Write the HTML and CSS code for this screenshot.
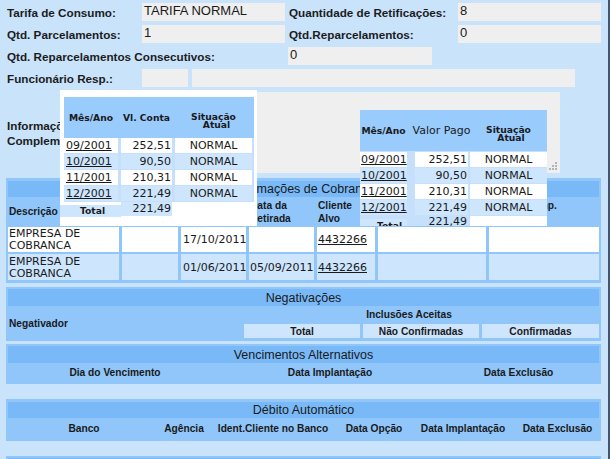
FILE: index.html
```html
<!DOCTYPE html>
<html lang="pt">
<head>
<meta charset="utf-8">
<title>Consulta</title>
<link rel="stylesheet" href="styles.css">
</head>
<body>
<div class="page">
  <div class="form">
    <div class="row">
      <span class="lbl w135">Tarifa de Consumo:</span>
      <span class="val w143">TARIFA NORMAL</span>
      <span class="lbl l2">Quantidade de Retificações:</span>
      <span class="val w143">8</span>
    </div>
    <div class="row">
      <span class="lbl w135">Qtd. Parcelamentos:</span>
      <span class="val w143">1</span>
      <span class="lbl l2">Qtd.Reparcelamentos:</span>
      <span class="val w143">0</span>
    </div>
    <div class="row">
      <span class="lbl w281">Qtd. Reparcelamentos Consecutivos:</span>
      <span class="val w144">0</span>
    </div>
    <div class="row">
      <span class="lbl w135">Funcionário Resp.:</span>
      <span class="val w46"></span>
      <span class="val w383"></span>
    </div>
    <div class="row info">
      <span class="lbl w135 wrap">Informações Complementares:</span>
      <div class="textarea">
        <svg class="grip" width="10" height="10" viewBox="0 0 10 10">
          <rect x="7" y="1" width="2" height="2" fill="#b4b4b4"/>
          <rect x="4" y="4" width="2" height="2" fill="#b4b4b4"/>
          <rect x="7" y="4" width="2" height="2" fill="#b4b4b4"/>
          <rect x="1" y="7" width="2" height="2" fill="#b4b4b4"/>
          <rect x="4" y="7" width="2" height="2" fill="#b4b4b4"/>
          <rect x="7" y="7" width="2" height="2" fill="#b4b4b4"/>
        </svg>
      </div>
    </div>
  </div>

  <div class="panel cob">
    <div class="band b16">Informações de Cobrança</div>
    <div class="cob-grid">
      <div class="h">Descrição</div>
      <div class="h"></div>
      <div class="h"></div>
      <div class="h">Data da<br>Retirada</div>
      <div class="h">Cliente<br>Alvo</div>
      <div class="h"></div>
      <div class="h top">Retorno Emp.</div>

      <div class="d">EMPRESA DE<br>COBRANCA</div>
      <div class="d"></div>
      <div class="d p2">17/10/2011</div>
      <div class="d"></div>
      <div class="d"><a class="lnk">4432266</a></div>
      <div class="d"></div>
      <div class="d"></div>

      <div class="d alt">EMPRESA DE<br>COBRANCA</div>
      <div class="d alt"></div>
      <div class="d alt p2">01/06/2011</div>
      <div class="d alt">05/09/2011</div>
      <div class="d alt"><a class="lnk">4432266</a></div>
      <div class="d alt"></div>
      <div class="d alt"></div>
    </div>
  </div>

  <div class="panel neg">
    <div class="band">Negativações</div>
    <div class="neg-grid">
      <div class="h negativador">Negativador</div>
      <div class="h inc">Inclusões Aceitas</div>
      <div class="h sub">Total</div>
      <div class="h sub">Não Confirmadas</div>
      <div class="h sub">Confirmadas</div>
    </div>
  </div>

  <div class="panel venc">
    <div class="band">Vencimentos Alternativos</div>
    <div class="venc-grid">
      <div class="h c">Dia do Vencimento</div>
      <div class="h c">Data Implantação</div>
      <div class="h c">Data Exclusão</div>
    </div>
  </div>

  <div class="panel deb">
    <div class="band b16">Débito Automático</div>
    <div class="deb-grid">
      <div class="h c">Banco</div>
      <div class="h c">Agência</div>
      <div class="h c">Ident.Cliente no Banco</div>
      <div class="h c">Data Opção</div>
      <div class="h c">Data Implantação</div>
      <div class="h c">Data Exclusão</div>
    </div>
  </div>

  <div class="panel next">
    <div class="band"></div>
  </div>

  <div class="popup1">
    <div class="phead">
      <div class="ph w54">Mês/Ano</div>
      <div class="ph w51 m3">Vl. Conta</div>
      <div class="ph w77 m3 sit"><span>Situação</span><span class="atual">Atual</span></div>
    </div>
    <div class="pbody">
      <div class="prow"><a class="pc w54 lnk l">09/2001</a><span class="pc w51 m3 r">252,51</span><span class="pc w77 m3 ctr">NORMAL</span></div>
      <div class="prow alt"><a class="pc w54 lnk l">10/2001</a><span class="pc w51 m3 r">90,50</span><span class="pc w77 m3 ctr">NORMAL</span></div>
      <div class="prow"><a class="pc w54 lnk l">11/2001</a><span class="pc w51 m3 r">210,31</span><span class="pc w77 m3 ctr">NORMAL</span></div>
      <div class="prow alt"><a class="pc w54 lnk l">12/2001</a><span class="pc w51 m3 r">221,49</span><span class="pc w77 m3 ctr">NORMAL</span></div>
    </div>
    <div class="ptotal">
      <span class="tl">Total</span>
      <span class="tv">221,49</span>
    </div>
  </div>

  <div class="popup2">
    <div class="phead">
      <div class="ph w47">Mês/Ano</div>
      <div class="ph w53 m8 normal">Valor Pago</div>
      <div class="ph w77 m2 sit"><span>Situação</span><span class="atual a2">Atual</span></div>
    </div>
    <div class="prow"><a class="pc w47 lnk l1">09/2001</a><span class="pc w53 m8 r">252,51</span><span class="pc w77 m2 ctr">NORMAL</span></div>
    <div class="prow alt"><a class="pc w47 lnk l1">10/2001</a><span class="pc w53 m8 r">90,50</span><span class="pc w77 m2 ctr">NORMAL</span></div>
    <div class="prow"><a class="pc w47 lnk l1">11/2001</a><span class="pc w53 m8 r">210,31</span><span class="pc w77 m2 ctr">NORMAL</span></div>
    <div class="prow alt"><a class="pc w47 lnk l1">12/2001</a><span class="pc w53 m8 r">221,49</span><span class="pc w77 m2 ctr">NORMAL</span></div>
    <div class="ptotal2">
      <span class="tl2">Total</span>
      <span class="tv2">221,49</span>
      <span class="tw2"></span>
    </div>
  </div>
</div>
</body>
</html>
```

FILE: styles.css
```css
html, body {
  margin: 0;
  padding: 0;
}
body {
  background: #c9e3fb;
  color: #1a1a1a;
  height: 459px;
  overflow: hidden;
}
.page {
  position: relative;
  width: 595px;
  height: 459px;
  padding: 0 7px 0 6px;
  border-right: 2px solid #46556f;
  overflow: hidden;
}

/* top form */
.form {
  padding: 3px 0 0 1px;
  display: flex;
  flex-direction: column;
  gap: 4px;
}
.row {
  display: flex;
  align-items: center;
  height: 18px;
}
.lbl {
  flex: none;
  font: bold 11.7px "Liberation Sans", Arial, sans-serif;
  color: #1c1c1c;
  white-space: nowrap;
}
.lbl.wrap {
  white-space: normal;
  line-height: 15px;
}
.val {
  flex: none;
  box-sizing: border-box;
  height: 18px;
  line-height: 18px;
  padding-left: 2px;
  background: #efefef;
  font: 13px "Liberation Sans", Arial, sans-serif;
  color: #1a1a1a;
}
.w135 { width: 135px; }
.w143 { width: 143px; }
.w144 { width: 144px; }
.w281 { width: 281px; }
.w46 { width: 46px; }
.w383 { width: 383px; margin-left: 4px; }
.l2 { width: 169px; margin-left: 4px; }
.row.info {
  height: 81px;
  margin-top: 1px;
}
.textarea {
  position: relative;
  width: 418px;
  height: 81px;
  background: #efefef;
}
.grip {
  position: absolute;
  right: 2px;
  bottom: 2px;
}

/* panels */
.panel {
  background: #90c6fa;
  padding: 2px 2px 3px;
}
.band {
  height: 17px;
  background: #79b9f8;
  display: flex;
  align-items: center;
  justify-content: center;
  font: 12.5px "Liberation Sans", Arial, sans-serif;
  color: #1a1a1a;
}
.band.b16 { height: 16px; }
.h {
  display: flex;
  align-items: center;
  padding-left: 1px;
  font: bold 10.2px "Liberation Sans", Arial, sans-serif;
  line-height: 13px;
  color: #1a1a1a;
  white-space: nowrap;
}
.h.top {
  align-items: flex-start;
  padding-top: 1px;
}
.h.c {
  justify-content: center;
  padding-left: 0;
}

.cob {
  margin-top: 5px;
  padding-top: 3px;
}
.cob-grid {
  display: grid;
  grid-template-columns: 111px 56px 65px 65px 58px 108px 110px;
  grid-template-rows: 27px 25px 26px;
  gap: 2px 3px;
  margin-top: 1px;
}
.d {
  display: flex;
  align-items: center;
  padding-left: 1px;
  padding-top: 1px;
  background: #ffffff;
  font: 11px "DejaVu Sans", Verdana, sans-serif;
  line-height: 12px;
  color: #1a1a1a;
}
.d.alt { background: #cde5fd; }
.d.p2 { padding-left: 2px; }
.lnk {
  text-decoration: underline;
  color: #1a1a1a;
}

.neg { margin-top: 4px; }
.neg-grid {
  display: grid;
  grid-template-columns: 233px 116px 116px 117px;
  grid-template-rows: 16px 14px;
  gap: 2px 3px;
}
.negativador {
  grid-row: 1 / 3;
  padding-top: 3px;
}
.inc {
  grid-column: 2 / 5;
  justify-content: center;
  padding-right: 26px;
}
.sub {
  justify-content: center;
  padding-left: 0;
  background: #cde5fd;
}

.venc { margin-top: 3px; }
.venc-grid {
  display: grid;
  grid-template-columns: 214px 216px 161px;
  height: 18px;
}
.deb {
  margin-top: 15px;
  padding-top: 3px;
  padding-bottom: 2px;
}
.deb-grid {
  display: grid;
  grid-template-columns: 152px 48px 130px 72px 106px 83px;
  height: 21px;
}
.next { margin-top: 15px; }

/* overlay popups */
.popup1 {
  position: absolute;
  left: 60px;
  top: 90px;
  width: 197px;
  height: 136px;
  box-sizing: border-box;
  padding: 7px 3px 0 4px;
  background: #ffffff;
}
.popup2 {
  position: absolute;
  left: 360px;
  top: 110px;
  width: 187px;
  height: 116px;
  overflow: hidden;
  background: #c6e0fb;
}
.phead {
  display: flex;
  height: 41px;
  background: #99cbfd;
}
.ph {
  flex: none;
  display: flex;
  align-items: center;
  justify-content: center;
  white-space: nowrap;
  font: bold 9.2px "DejaVu Sans", Verdana, sans-serif;
  color: #1a1a1a;
}
.ph.normal {
  font-weight: normal;
  font-size: 11px;
}
.ph.sit {
  flex-direction: column;
  line-height: 8px;
  padding-top: 6px;
  box-sizing: border-box;
}
.atual { padding-left: 6px; }
.atual.a2 { padding-left: 5px; }
.pbody {
  background: #c6e0fb;
  padding: 0 2px 1px 0;
}
.prow {
  display: flex;
  height: 15px;
  margin-top: 1px;
}
.pbody .prow:first-child { margin-top: 0; }
.pc {
  flex: none;
  box-sizing: border-box;
  display: flex;
  align-items: center;
  height: 15px;
  background: #ffffff;
  font: 11px "DejaVu Sans", Verdana, sans-serif;
  color: #1a1a1a;
  white-space: nowrap;
}
.prow.alt .pc { background: #cde5fd; }
.pc.l { padding-left: 2px; }
.pc.l1 { padding-left: 1px; }
.pc.r { justify-content: flex-end; padding-right: 1px; }
.pc.ctr { justify-content: center; }
.w54 { width: 54px; }
.w51 { width: 51px; }
.w77 { width: 77px; }
.w47 { width: 47px; }
.w53 { width: 53px; }
.m3 { margin-left: 3px; }
.m8 { margin-left: 8px; }
.m2 { margin-left: 2px; }

.ptotal {
  display: flex;
  align-items: flex-start;
  margin-left: -4px;
}
.tl {
  width: 61px;
  height: 12px;
  margin-top: 3px;
  padding-left: 4px;
  box-sizing: border-box;
  background: #cde5fd;
  text-align: center;
  font: bold 9.2px "DejaVu Sans", Verdana, sans-serif;
  line-height: 12px;
}
.tv {
  width: 51px;
  height: 14px;
  box-sizing: border-box;
  padding-right: 1px;
  background: #cde5fd;
  text-align: right;
  font: 11px "DejaVu Sans", Verdana, sans-serif;
  line-height: 13px;
}
.ptotal2 {
  display: flex;
  align-items: flex-start;
  margin-top: 1px;
}
.tl2 {
  width: 47px;
  height: 12px;
  margin-top: 3px;
  padding-left: 12px;
  box-sizing: border-box;
  background: #cde5fd;
  text-align: center;
  font: bold 9.2px "DejaVu Sans", Verdana, sans-serif;
  line-height: 14px;
}
.tv2 {
  width: 53px;
  height: 15px;
  margin-left: 8px;
  box-sizing: border-box;
  padding-right: 1px;
  text-align: right;
  font: 11px "DejaVu Sans", Verdana, sans-serif;
  line-height: 12px;
}
.tw2 {
  width: 77px;
  height: 15px;
  margin-left: 2px;
  background: #ffffff;
}
```
